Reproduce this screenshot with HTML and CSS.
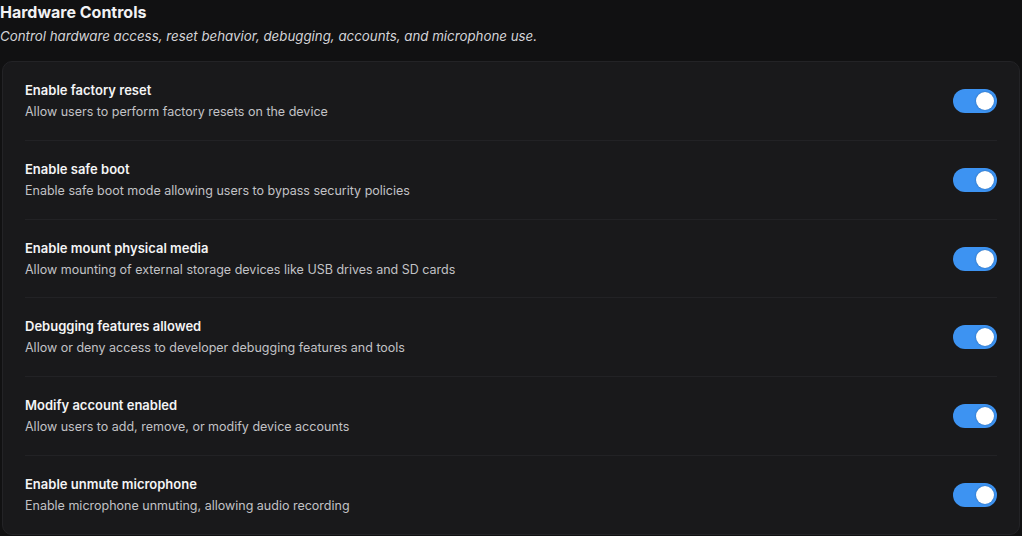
FILE: index.html
```html
<!DOCTYPE html>
<html lang="en">
<head>
    <meta charset="UTF-8">
    <meta name="viewport" content="width=device-width, initial-scale=1.0">
    <title>Hardware Controls</title>
    <link rel="stylesheet" href="styles.css">
</head>
<body>
    <div class="section-header">
        <h2>Hardware Controls</h2>
        <p>Control hardware access, reset behavior, debugging, accounts, and microphone use.</p>
    </div>

    <div class="settings-card">
        <div class="setting-row">
            <div class="setting-text">
                <h3>Enable factory reset</h3>
                <p>Allow users to perform factory resets on the device</p>
            </div>
            <label class="switch"><input type="checkbox" checked><span class="slider"></span></label>
        </div>
        <div class="setting-row">
            <div class="setting-text">
                <h3>Enable safe boot</h3>
                <p>Enable safe boot mode allowing users to bypass security policies</p>
            </div>
            <label class="switch"><input type="checkbox" checked><span class="slider"></span></label>
        </div>
        <div class="setting-row">
            <div class="setting-text">
                <h3>Enable mount physical media</h3>
                <p>Allow mounting of external storage devices like USB drives and SD cards</p>
            </div>
            <label class="switch"><input type="checkbox" checked><span class="slider"></span></label>
        </div>
        <div class="setting-row">
            <div class="setting-text">
                <h3>Debugging features allowed</h3>
                <p>Allow or deny access to developer debugging features and tools</p>
            </div>
            <label class="switch"><input type="checkbox" checked><span class="slider"></span></label>
        </div>
        <div class="setting-row">
            <div class="setting-text">
                <h3>Modify account enabled</h3>
                <p>Allow users to add, remove, or modify device accounts</p>
            </div>
            <label class="switch"><input type="checkbox" checked><span class="slider"></span></label>
        </div>
        <div class="setting-row">
            <div class="setting-text">
                <h3>Enable unmute microphone</h3>
                <p>Enable microphone unmuting, allowing audio recording</p>
            </div>
            <label class="switch"><input type="checkbox" checked><span class="slider"></span></label>
        </div>
    </div>
</body>
</html>
```

FILE: styles.css
```css
/* Basic styling */
* {
    margin: 0;
    padding: 0;
    box-sizing: border-box;
    font-family: Inter, "Noto Sans", sans-serif;
}

body {
    background-color: #111112;
    color: #e8e8ea;
    padding-top: 2px;
}

.section-header {
    margin-bottom: 15px;
}

.section-header h2 {
    font-size: 16px;
    font-weight: 700;
    line-height: 20px;
    color: #f2f2f4;
}

.section-header p {
    font-size: 13.3px;
    font-style: italic;
    line-height: 20px;
    margin-top: 4px;
    color: #d4d4d8;
}

.settings-card {
    margin: 0 2px;
    background-color: #19191b;
    border: 1px solid #232326;
    border-radius: 10px;
    padding: 0 22px;
}

.setting-row {
    display: flex;
    justify-content: space-between;
    align-items: center;
    padding: 18px 0 17.75px;
    border-bottom: 1px solid #222225;
}

.setting-row:last-child {
    border-bottom: none;
}

.setting-text h3 {
    font-size: 13px;
    font-weight: 600;
    line-height: 20px;
    color: #f4f4f5;
}

.setting-text p {
    font-size: 12.5px;
    line-height: 20px;
    margin-top: 2px;
    color: #c2c2c6;
}

.switch {
    position: relative;
    display: inline-block;
    width: 44px;
    height: 24px;
    cursor: pointer;
}

.switch input {
    display: none;
}

.slider {
    position: absolute;
    inset: 0;
    background-color: #3f3f46;
    border-radius: 12px;
    transition: background-color 0.2s;
}

.slider::before {
    content: "";
    position: absolute;
    top: 3px;
    left: 3px;
    width: 18px;
    height: 18px;
    border-radius: 50%;
    background-color: #fff;
    box-shadow: 0 0 2px rgba(0, 0, 0, 0.35);
    transition: transform 0.2s;
}

.switch input:checked + .slider {
    background-color: #3d93f2;
}

.switch input:checked + .slider::before {
    transform: translateX(20px);
}
```
